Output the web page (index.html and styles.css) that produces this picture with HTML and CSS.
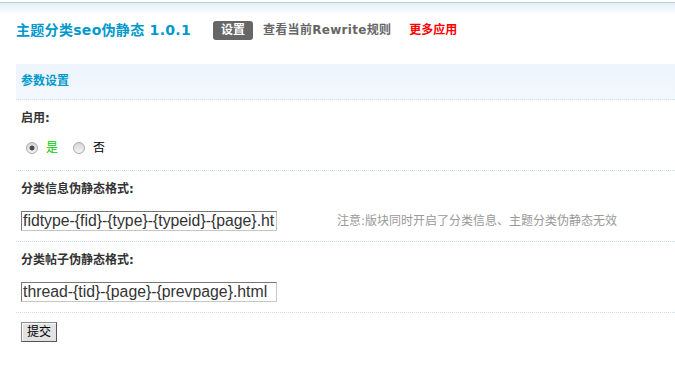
FILE: index.html
```html
<!DOCTYPE html>
<html lang="zh-CN">
<head>
<meta charset="utf-8">
<title>主题分类seo伪静态 1.0.1</title>
<link rel="stylesheet" href="styles.css">
</head>
<body>
<div class="top">
  <div class="titlebar">
    <h3 class="title">主题分类seo伪静态 1.0.1</h3>
    <ul class="nav">
      <li><a class="current" href="#">设置</a></li>
      <li><a class="link" href="#">查看当前Rewrite规则</a></li>
      <li><a class="more" href="#">更多应用</a></li>
    </ul>
  </div>
</div>
<form class="panel">
  <div class="panel-head">参数设置</div>

  <div class="label-row">启用:</div>
  <div class="value-row radios">
    <label class="opt on"><input type="radio" name="open" checked><span>是</span></label>
    <label class="opt"><input type="radio" name="open"><span>否</span></label>
  </div>

  <div class="label-row">分类信息伪静态格式:</div>
  <div class="value-row">
    <input class="txt" type="text" value="fidtype-{fid}-{type}-{typeid}-{page}.html">
    <span class="tip">注意:版块同时开启了分类信息、主题分类伪静态无效</span>
  </div>

  <div class="label-row">分类帖子伪静态格式:</div>
  <div class="value-row">
    <input class="txt" type="text" value="thread-{tid}-{page}-{prevpage}.html">
    <span class="tip"></span>
  </div>

  <div class="submit-row">
    <button class="btn" type="button">提交</button>
  </div>
</form>
</body>
</html>
```
FILE: styles.css
```css
html, body {
  margin: 0;
  padding: 0;
  background: #fff;
}
body {
  font: 12px/18px "DejaVu Sans", "Noto Sans CJK SC", sans-serif;
  color: #333;
}
.top {
  margin-top: 2px;
  border-top: 1px solid #b8cdd9;
  background: linear-gradient(#e3eef7, #ffffff 12px);
  padding: 17px 0 24px 16px;
}
.titlebar {
  display: flex;
  align-items: center;
  height: 20px;
}
.title {
  margin: 0 22px 0 0;
  font-size: 14px;
  line-height: 20px;
  font-weight: bold;
  color: #0099cc;
  letter-spacing: 0.3px;
}
.nav {
  display: flex;
  align-items: center;
  list-style: none;
  margin: 0;
  padding: 0;
}
.nav a {
  display: block;
  font-weight: bold;
  color: #666;
  text-decoration: none;
  line-height: 19px;
}
.nav .link {
  letter-spacing: 0.3px;
}
.nav .current {
  background: #666;
  color: #fff;
  border-radius: 3px;
  padding: 0 8px;
  height: 19px;
  margin-right: 10px;
}
.nav .more {
  color: #f00;
  margin-left: 18px;
}
.panel {
  margin: 0 0 0 16px;
}
.panel-head {
  height: 35px;
  line-height: 35px;
  padding-left: 5px;
  background: linear-gradient(#edf4fc, #f3f8fd);
  color: #0099cc;
  font-weight: bold;
  border-bottom: 1px dotted #c6e1f4;
}
.label-row {
  padding: 9px 5px 3px;
  font-weight: bold;
  color: #333;
}
.value-row {
  display: grid;
  grid-template-columns: 316px 1fr;
  align-items: center;
  padding: 10px 0 10px 5px;
  border-bottom: 1px dotted #c6e1f4;
}
.radios {
  display: flex;
  align-items: center;
  height: 20px;
  padding: 8px 0 12px 5px;
}
.opt {
  display: flex;
  align-items: center;
  margin-right: 10px;
  color: #000;
}
.opt.on span {
  color: #00cc00;
}
.opt input {
  appearance: none;
  -webkit-appearance: none;
  width: 12px;
  height: 12px;
  margin: 0 8px 0 5px;
  border: 1px solid #a9a9a9;
  border-radius: 50%;
  background: linear-gradient(#d6d6d6, #f5f5f5);
  box-sizing: border-box;
}
.opt input:checked {
  background: radial-gradient(circle, #4d4d4d 0 2.2px, transparent 2.8px), linear-gradient(#d6d6d6, #f5f5f5);
}
.txt {
  display: block;
  width: 256px;
  height: 20px;
  box-sizing: border-box;
  margin: 0;
  padding: 0 1px;
  border: 1px solid;
  border-color: #777 #c6c6c6 #c6c6c6 #777;
  background: #fff;
  font: 15.8px/18px "Liberation Sans", sans-serif;
  color: #333;
  outline: none;
}
.tip {
  color: #999;
  font-size: 12px;
}
.submit-row {
  padding: 9px 0 10px 5px;
}
.btn {
  display: block;
  width: 36px;
  height: 20px;
  margin: 0;
  padding: 0;
  box-sizing: border-box;
  border: 1px solid #8a8a8a;
  border-right-color: #555;
  border-bottom-color: #555;
  background: #e2e2e2;
  box-shadow: inset 1px 1px 0 #fafafa;
  font: 12px/18px "DejaVu Sans", "Noto Sans CJK SC", sans-serif;
  color: #000;
}
```
